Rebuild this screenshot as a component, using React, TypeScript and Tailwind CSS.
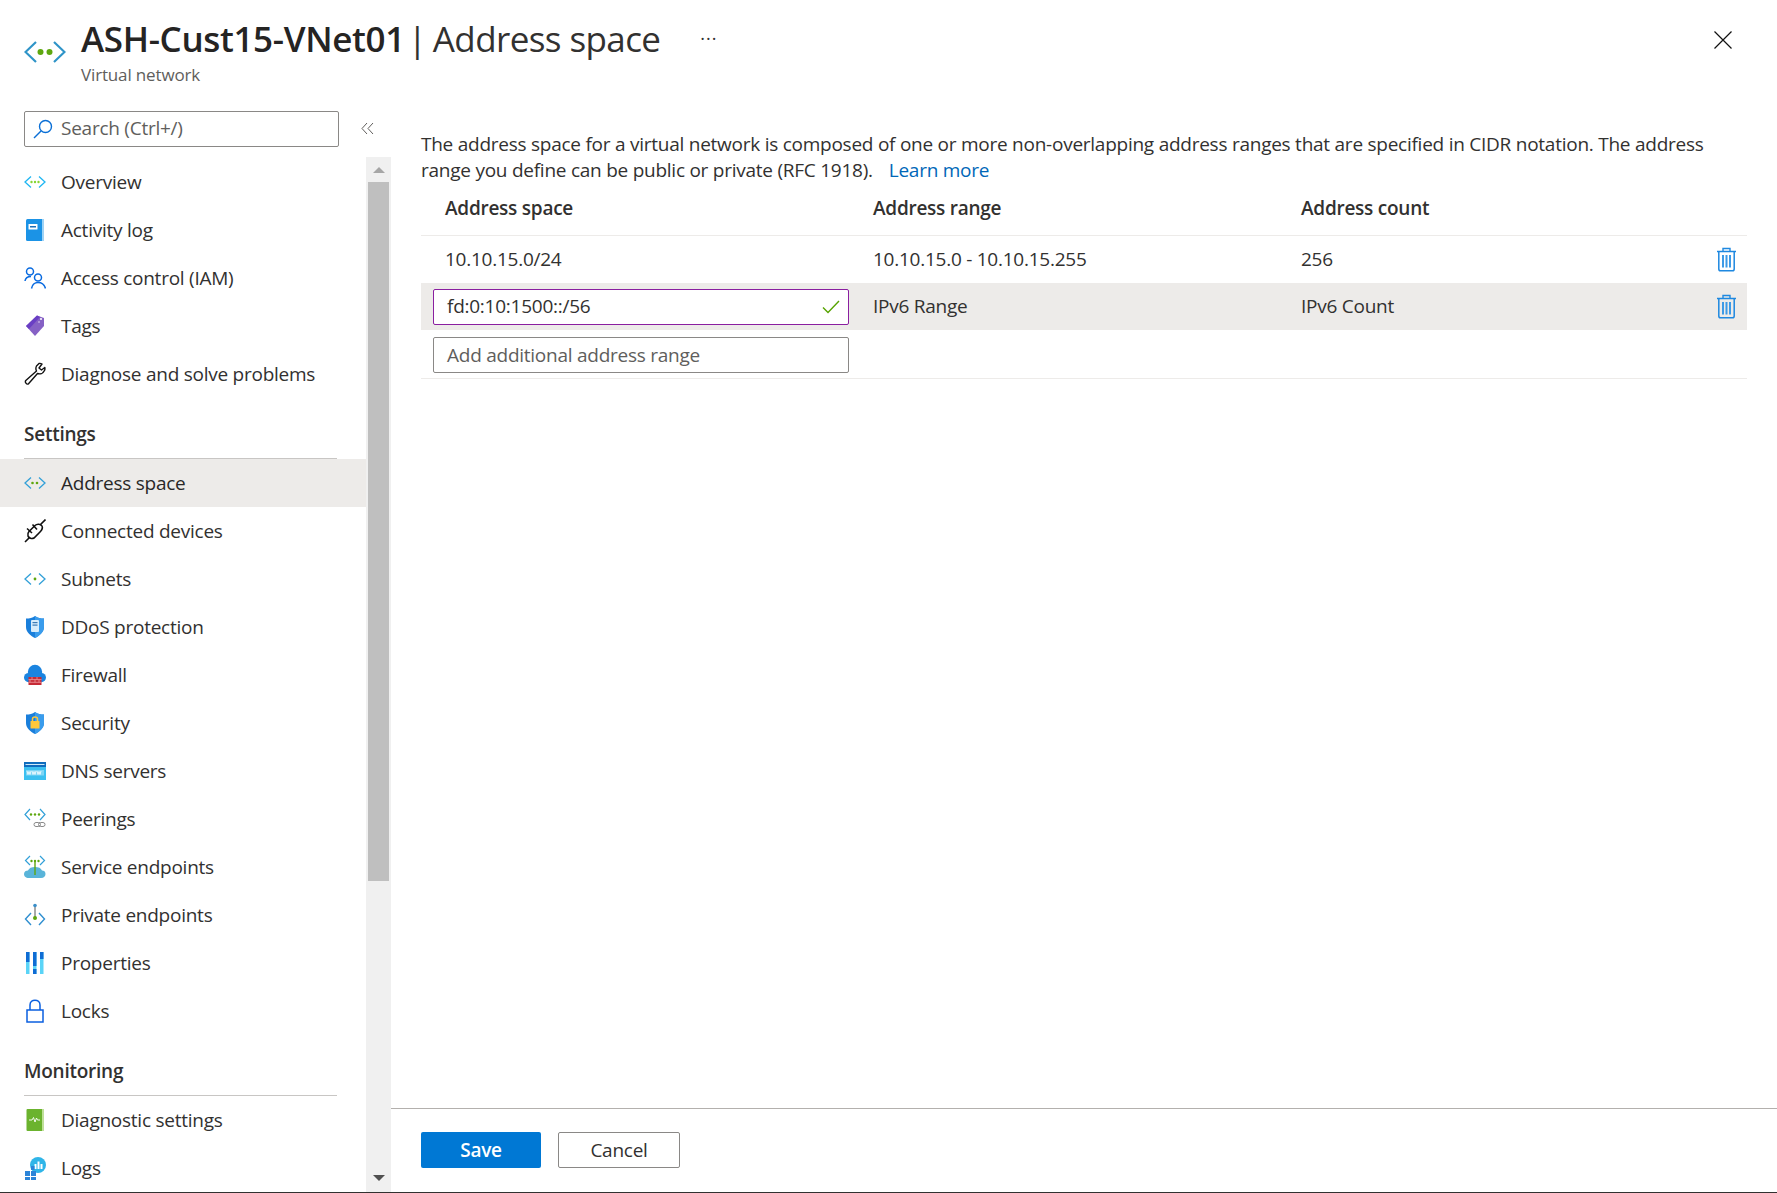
import React from "react";

const I = ({ children }: { children: React.ReactNode }) => (
  <svg width="22" height="24" viewBox="0 0 22 24" className="shrink-0">{children}</svg>
);

const Chev = ({ c1 = "#32a0d8", c2 = "#32a0d8" }: { c1?: string; c2?: string }) => (
  <>
    <path d="M7 6.5 L1 12 L7 17.5" fill="none" stroke={c1} strokeWidth="1.3" />
    <path d="M15 6.5 L21 12 L15 17.5" fill="none" stroke={c2} strokeWidth="1.3" />
  </>
);

const Overview = () => (
  <I>
    <Chev c1="#1fb6f2" c2="#1fb6f2" />
    <circle cx="7.5" cy="12" r="1.2" fill="#86d633" />
    <circle cx="11" cy="12" r="1.2" fill="#86d633" />
    <circle cx="14.5" cy="12" r="1.2" fill="#86d633" />
  </I>
);
const AddressIcon = () => (
  <I>
    <Chev />
    <circle cx="8.5" cy="12" r="1.3" fill="#5ea70f" />
    <circle cx="13" cy="12" r="1.3" fill="#5ea70f" />
  </I>
);
const SubnetIcon = () => (
  <I>
    <Chev />
    <circle cx="11" cy="12" r="1.4" fill="#5ea70f" />
  </I>
);
const ActivityIcon = () => (
  <I>
    <rect x="2" y="1" width="18" height="22" rx="1.5" fill="#1b93e6" />
    <rect x="18" y="1" width="2" height="22" fill="#9fd3f5" />
    <rect x="4.5" y="6" width="9" height="5.5" rx="0.5" fill="#fff" />
    <rect x="6" y="8" width="6" height="1.5" fill="#1b6fb8" />
  </I>
);
const IamIcon = () => (
  <I>
    <circle cx="6" cy="5.5" r="3.5" fill="none" stroke="#0a6be0" strokeWidth="1.5" />
    <path d="M1 15 C1.5 11.5 4 10.5 7 10.5" fill="none" stroke="#0a6be0" strokeWidth="1.5" />
    <circle cx="14" cy="11.5" r="3.5" fill="none" stroke="#0a6be0" strokeWidth="1.5" />
    <path d="M7.5 22.5 C8.5 17.5 11 16.5 14 16.5 C17 16.5 20 17.5 21.5 22.5" fill="none" stroke="#0a6be0" strokeWidth="1.5" />
  </I>
);
const TagIcon = () => (
  <I>
    <path d="M2 12 L13 1.5 L20 4 V12 L11 22 Z" fill="#8661c5" />
    <path d="M2 12 L13 1.5 L16 3 L5 15 Z" fill="#6a3fc4" />
    <circle cx="17" cy="5" r="1" fill="#fff" />
    <circle cx="15" cy="8" r="0.8" fill="#e5d9f6" />
  </I>
);
const WrenchIcon = () => (
  <I>
    <path
      d="M15 1.5 L12.5 4 C11.5 6 12 8 12.5 9 L1.8 18.5 C0.6 20 2.5 23 4.5 21.8 L13.5 11.5 C16 12.5 19 11.5 20.5 8.5 C21 7.5 21 6.5 20.8 5.5 L17.5 8 L15 6 L18 2 C17 1.4 16 1.3 15 1.5 Z"
      fill="none"
      stroke="#111"
      strokeWidth="1.4"
      strokeLinejoin="round"
    />
  </I>
);
const PlugIcon = () => (
  <I>
    <path d="M1 23 L6 18 M16 6 L21.5 0.5" stroke="#111" strokeWidth="1.6" />
    <path d="M5 12.5 L11 6.5 C13 4.5 17 5 18 7 C19 9 18 11 16 13 L10 19 C8 20 4.5 19.5 4 17 C3.5 15 4 13.5 5 12.5 Z" fill="none" stroke="#111" strokeWidth="1.6" />
    <path d="M3 9.5 L8 14 M8.5 5.5 L13 10.5" stroke="#111" strokeWidth="1.6" />
  </I>
);
const Shield = ({ children }: { children?: React.ReactNode }) => (
  <I>
    <path d="M11 1 C13.5 3 16.5 3.5 20 3.5 V12 C20 17.5 15 21 11 23 C7 21 2 17.5 2 12 V3.5 C5.5 3.5 8.5 3 11 1 Z" fill="#1a7fdb" />
    <path d="M11 1 C13.5 3 16.5 3.5 20 3.5 V12 C20 17.5 15 21 11 23 Z" fill="#3a9cec" />
    {children}
  </I>
);
const DdosIcon = () => (
  <Shield>
    <rect x="7" y="5" width="8" height="12" rx="1" fill="#d7ecfb" />
    <rect x="8.5" y="7" width="5" height="1.2" fill="#3b7ab5" />
    <rect x="8.5" y="9.5" width="5" height="1.2" fill="#3b7ab5" />
  </Shield>
);
const SecurityIcon = () => (
  <Shield>
    <rect x="6.5" y="10" width="9" height="7.5" rx="0.6" fill="#ffc83a" />
    <path d="M8.5 10 V8 C8.5 5.2 13.5 5.2 13.5 8 V10" fill="none" stroke="#ffc83a" strokeWidth="1.5" />
  </Shield>
);
const FirewallIcon = () => (
  <I>
    <circle cx="11" cy="9" r="7.2" fill="#1b84e0" />
    <circle cx="4.6" cy="14.6" r="4.6" fill="#1b84e0" />
    <circle cx="17.4" cy="14.6" r="4.6" fill="#1b84e0" />
    <rect x="4.6" y="10" width="12.8" height="9.2" fill="#1b84e0" />
    <rect x="4.5" y="14" width="13" height="8" fill="#c62b36" />
    <path d="M4.5 16.6 H17.5 M4.5 19.3 H17.5 M8 14 V16.6 M13 14 V16.6 M6 16.6 V19.3 M11 16.6 V19.3 M15 16.6 V19.3" stroke="#f2a6aa" strokeWidth="0.7" />
  </I>
);
const DnsIcon = () => (
  <I>
    <rect x="0" y="3" width="22" height="18" fill="#3cc0f0" />
    <rect x="0" y="3" width="22" height="5" fill="#0f6cbd" />
    <rect x="1.5" y="5" width="19" height="1" fill="#cde8f8" />
    <rect x="2" y="11" width="18" height="5.5" fill="#7fd6f5" />
    <path d="M3 12 L4 15.5 L5 12.5 L6 15.5 L7 12 M8 12 L9 15.5 L10 12.5 L11 15.5 L12 12 M13 12 L14 15.5 L15 12.5 L16 15.5 L17 12" fill="none" stroke="#fff" strokeWidth="0.8" />
  </I>
);
const PeeringIcon = () => (
  <I>
    <path d="M6 2 L1 7.5 L6 13" fill="none" stroke="#32a0d8" strokeWidth="1.2" />
    <path d="M16 2 L21 7.5 L16 13" fill="none" stroke="#32a0d8" strokeWidth="1.2" />
    <circle cx="7" cy="7.5" r="1.2" fill="#5ea70f" />
    <circle cx="11" cy="7.5" r="1.2" fill="#5ea70f" />
    <circle cx="15" cy="7.5" r="1.2" fill="#5ea70f" />
    <rect x="10" y="15.5" width="6.5" height="4" rx="2" fill="none" stroke="#8a8a8a" strokeWidth="1" />
    <rect x="14.5" y="15.5" width="6.5" height="4" rx="2" fill="none" stroke="#8a8a8a" strokeWidth="1" />
  </I>
);
const ServiceIcon = () => (
  <I>
    <path d="M5 23 C1.5 23 0 21 0 19 C0 16.5 2 15.5 4 15.5 C5 13 7.5 12 11 12 C14.5 12 17 13 18 15.5 C20 15.5 21.5 16.5 21.5 19 C21.5 21 20 23 17 23 Z" fill="#59b4d9" />
    <path d="M6 1 L1.5 5.5 L6 10 M16 1 L20.5 5.5 L16 10" fill="none" stroke="#32a0d8" strokeWidth="1.2" />
    <path d="M11 6 V20" stroke="#5ea70f" strokeWidth="1.4" />
    <circle cx="7.5" cy="6" r="1.2" fill="#5ea70f" />
    <circle cx="11" cy="6" r="1.2" fill="#5ea70f" />
    <circle cx="14.5" cy="6" r="1.2" fill="#5ea70f" />
  </I>
);
const PrivateIcon = () => (
  <I>
    <path d="M7 10 L1.5 16 L7 22 M15 10 L20.5 16 L15 22" fill="none" stroke="#2f8fd0" strokeWidth="1.4" />
    <path d="M11 3 V15" stroke="#555" strokeWidth="1" />
    <circle cx="11" cy="2.5" r="1.8" fill="#3b8fc9" />
    <circle cx="11" cy="15" r="2" fill="#5ea70f" />
  </I>
);
const PropIcon = () => (
  <I>
    <rect x="2" y="1" width="3.5" height="22" fill="#5ad4f7" />
    <rect x="2" y="1" width="3.5" height="10" fill="#0f6cd4" />
    <rect x="9" y="1" width="3.5" height="22" fill="#5ad4f7" />
    <rect x="9" y="1" width="3.5" height="14" fill="#0f6cd4" />
    <rect x="9" y="18" width="3.5" height="5" fill="#0f6cd4" />
    <rect x="16" y="1" width="3.5" height="22" fill="#5ad4f7" />
    <rect x="16" y="1" width="3.5" height="7" fill="#0f6cd4" />
  </I>
);
const LockIcon = () => (
  <I>
    <rect x="3" y="11" width="16" height="12" fill="none" stroke="#0a5fe0" strokeWidth="1.5" />
    <path d="M6 11 V6 C6 -0.5 16 -0.5 16 6 V11" fill="none" stroke="#0a5fe0" strokeWidth="1.5" />
  </I>
);
const DiagIcon = () => (
  <I>
    <rect x="2.5" y="1" width="17.5" height="22" rx="1" fill="#6bb32e" />
    <rect x="18" y="1" width="2" height="22" fill="#bfe09a" />
    <path d="M5 12 H8 L9.5 9.5 L11 14 L12.5 10 L13.5 12 H16" fill="none" stroke="#fff" strokeWidth="0.9" />
  </I>
);
const LogsIcon = () => (
  <I>
    <circle cx="14" cy="9" r="8" fill="#2fb5e8" />
    <rect x="10.5" y="8" width="2" height="5" fill="#fff" />
    <rect x="13.5" y="5.5" width="2" height="7.5" fill="#fff" />
    <rect x="16.5" y="8" width="2" height="5" fill="#fff" />
    <rect x="1" y="15" width="5" height="5" fill="#2b84d8" />
    <rect x="7" y="15" width="5" height="5" fill="#2b84d8" />
    <rect x="1" y="21" width="5" height="3" fill="#2b84d8" />
    <rect x="7" y="21" width="5" height="3" fill="#2b84d8" />
    <rect x="7" y="10" width="3.5" height="4" fill="#2b84d8" />
  </I>
);

const Trash = () => (
  <svg width="21" height="25" viewBox="0 0 21 25" className="shrink-0">
    <path d="M1 4.5 H20 M7 4.5 V1.5 H14 V4.5" fill="none" stroke="#1e88e0" strokeWidth="1.4" />
    <path d="M2.8 4.5 V22 C2.8 23 3.5 23.8 4.5 23.8 H16.5 C17.5 23.8 18.2 23 18.2 22 V4.5" fill="none" stroke="#1e88e0" strokeWidth="1.5" />
    <path d="M7 8 V20.5 M10.5 8 V20.5 M14 8 V20.5" stroke="#3d9ae6" strokeWidth="2" />
  </svg>
);

const NavRow = ({ icon, label, active }: { icon: React.ReactNode; label: string; active?: boolean }) => (
  <div className={`flex h-12 items-center gap-[15px] pl-6 ${active ? "bg-[#edebe9] text-[#292827]" : "text-[#323130]"}`}>
    {icon}
    <span>{label}</span>
  </div>
);

const Section = ({ label }: { label: string }) => (
  <div className="mt-[12px] ml-6 mr-[29px] h-[49px] border-b border-[#c8c6c4] pt-[10px] font-semibold text-[#323130]">
    {label}
  </div>
);

const group1: [React.ReactNode, string][] = [
  [<Overview />, "Overview"],
  [<ActivityIcon />, "Activity log"],
  [<IamIcon />, "Access control (IAM)"],
  [<TagIcon />, "Tags"],
  [<WrenchIcon />, "Diagnose and solve problems"],
];
const group2: [React.ReactNode, string][] = [
  [<PlugIcon />, "Connected devices"],
  [<SubnetIcon />, "Subnets"],
  [<DdosIcon />, "DDoS protection"],
  [<FirewallIcon />, "Firewall"],
  [<SecurityIcon />, "Security"],
  [<DnsIcon />, "DNS servers"],
  [<PeeringIcon />, "Peerings"],
  [<ServiceIcon />, "Service endpoints"],
  [<PrivateIcon />, "Private endpoints"],
  [<PropIcon />, "Properties"],
  [<LockIcon />, "Locks"],
];

export default function App() {
  return (
    <div className="flex h-[1193px] w-[1777px] flex-col overflow-hidden border-b border-[#323130] bg-white font-['Open_Sans','Noto_Sans',sans-serif] text-[19px] tracking-[-0.25px] text-[#323130]">
      {/* header */}
      <div className="flex h-[111px] shrink-0">
        <div className="pl-6 pt-[40px]">
          <svg width="42" height="24" viewBox="0 0 42 24">
            <path d="M12 2 L1.5 12 L12 22" fill="none" stroke="#2f94c8" strokeWidth="2.2" />
            <path d="M30 2 L40.5 12 L30 22" fill="none" stroke="#2f94c8" strokeWidth="2.2" />
            <circle cx="16.5" cy="12" r="3" fill="#5ea70f" />
            <circle cx="25.5" cy="12" r="3" fill="#5ea70f" />
          </svg>
        </div>
        <div className="ml-[15px] pt-[15px]">
          <div className="flex items-center text-[35px] leading-[46px] whitespace-nowrap">
            <span className="font-semibold tracking-[-0.35px] text-[#252423]">ASH-Cust15-VNet01</span>
            <span className="ml-[3px] text-[#323130]">|</span>
            <span className="ml-[6px] tracking-[-0.6px] text-[#323130]">Address space</span>
            <span className="ml-[40px] mb-[1px] text-[18px] tracking-[1px]">···</span>
          </div>
          <div className="text-[17px] leading-[26px] tracking-[-0.15px] text-[#605e5c]">Virtual network</div>
        </div>
        <div className="ml-auto pr-[45px] pt-[31px]">
          <svg width="18" height="18" viewBox="0 0 18 18">
            <path d="M0.5 0.5 L17.5 17.5 M17.5 0.5 L0.5 17.5" stroke="#111" strokeWidth="1.2" />
          </svg>
        </div>
      </div>

      <div className="flex min-h-0 flex-1">
        {/* sidebar */}
        <div className="flex w-[391px] shrink-0 flex-col">
          <div className="flex h-[46px] shrink-0 items-start pl-6">
            <div className="flex h-[36px] w-[315px] items-center gap-[8px] rounded-[2px] border border-[#8a8886] pb-[1px] pl-[8px] text-[#605e5c]">
              <svg width="20" height="20" viewBox="0 0 20 20" className="shrink-0">
                <circle cx="12.5" cy="7.5" r="6" fill="none" stroke="#0a6fd6" strokeWidth="1.4" />
                <path d="M8 12 L1 19" stroke="#0a6fd6" strokeWidth="1.4" />
              </svg>
              <span>Search (Ctrl+/)</span>
            </div>
            <div className="ml-[22px] mt-[11px]">
              <svg width="13" height="13" viewBox="0 0 13 13">
                <path d="M6 1 L1 6.5 L6 12 M12 1 L7 6.5 L12 12" fill="none" stroke="#605e5c" strokeWidth="1" />
              </svg>
            </div>
          </div>
          <div className="flex min-h-0 flex-1">
            <div className="w-[366px] shrink-0 overflow-hidden pt-[1px]">
              {group1.map(([icon, label]) => (
                <NavRow key={label} icon={icon} label={label} />
              ))}
              <Section label="Settings" />
              <NavRow icon={<AddressIcon />} label="Address space" active />
              {group2.map(([icon, label]) => (
                <NavRow key={label} icon={icon} label={label} />
              ))}
              <Section label="Monitoring" />
              <NavRow icon={<DiagIcon />} label="Diagnostic settings" />
              <NavRow icon={<LogsIcon />} label="Logs" />
            </div>
            {/* scrollbar */}
            <div className="flex w-[25px] shrink-0 flex-col items-center bg-[#f0f0f0]">
              <div className="flex h-[25px] w-full shrink-0 items-center justify-center">
                <div className="h-0 w-0 border-x-[6px] border-b-[6px] border-x-transparent border-b-[#a6a6a6]" />
              </div>
              <div className="h-[699px] w-[21px] shrink-0 bg-[#bfbfbf]" />
              <div className="flex flex-1 items-end pb-[11px]">
                <div className="h-0 w-0 border-x-[6px] border-t-[6px] border-x-transparent border-t-[#505050]" />
              </div>
            </div>
          </div>
        </div>

        {/* main */}
        <div className="flex min-w-0 flex-1 flex-col">
          <div className="min-h-0 flex-1 pr-[30px] pl-[30px]">
            <p className="pt-[20px] leading-[26px] text-[#323130]">
              The address space for a virtual network is composed of one or more non-overlapping address ranges that are specified in CIDR notation. The address
              <br />
              range you define can be public or private (RFC 1918).<a className="ml-4 text-[#0067b8]">Learn more</a>
            </p>
            <div className="mt-[3px] grid grid-cols-[452px_428px_1fr]">
              <div className="col-span-3 grid h-[50px] grid-cols-subgrid items-center border-b border-[#edebe9] pb-[4px] pl-6 font-semibold">
                <span className="-ml-6 pl-6">Address space</span>
                <span>Address range</span>
                <span>Address count</span>
              </div>
              <div className="col-span-3 grid h-[47px] grid-cols-subgrid items-center pl-6">
                <span className="-ml-6 pl-6">10.10.15.0/24</span>
                <span>10.10.15.0 - 10.10.15.255</span>
                <div className="flex items-center justify-between pr-[10px]">
                  <span>256</span>
                  <Trash />
                </div>
              </div>
              <div className="col-span-3 grid h-[47px] grid-cols-subgrid items-center bg-[#edebe9]">
                <div className="pl-3">
                  <div className="flex h-[36px] w-[416px] items-center justify-between rounded-[2px] border border-[#8a1fa0] bg-white pr-[8px] pl-[13px]">
                    <span>fd:0:10:1500::/56</span>
                    <svg width="18" height="14" viewBox="0 0 18 14">
                      <path d="M1 7.5 L6 12.5 L17 1" fill="none" stroke="#57a300" strokeWidth="1.4" />
                    </svg>
                  </div>
                </div>
                <span>IPv6 Range</span>
                <div className="flex items-center justify-between pr-[10px]">
                  <span>IPv6 Count</span>
                  <Trash />
                </div>
              </div>
              <div className="col-span-3 flex h-[49px] items-start border-b border-[#edebe9] pt-[7px] pl-3">
                <div className="flex h-[36px] w-[416px] items-center rounded-[2px] border border-[#8a8886] bg-white pl-[13px] text-[#605e5c]">
                  Add additional address range
                </div>
              </div>
            </div>
          </div>
          <div className="flex h-[84px] shrink-0 items-start gap-[17px] border-t border-[#b3b0ad] pt-[23px] pl-[30px]">
            <button className="h-[36px] w-[120px] rounded-[2px] bg-[#0078d4] font-semibold text-white">Save</button>
            <button className="h-[36px] w-[122px] rounded-[2px] border border-[#8a8886] bg-white text-[#323130]">Cancel</button>
          </div>
        </div>
      </div>
    </div>
  );
}
